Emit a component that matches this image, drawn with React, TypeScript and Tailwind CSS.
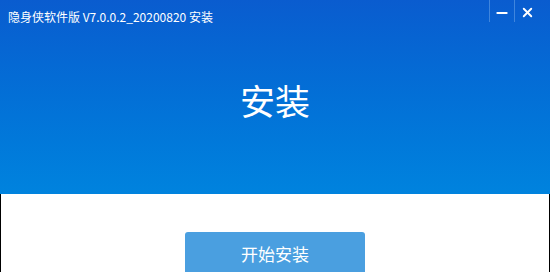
import { Minus, X } from "lucide-react";

const FONT = "'Microsoft YaHei', 'Noto Sans CJK SC', 'Noto Sans', sans-serif";

export default function App() {
  return (
    <div className="w-[550px] h-[272px] overflow-hidden flex flex-col bg-white" style={{ fontFamily: FONT }}>
      <div className="h-[194px] shrink-0 flex flex-col bg-gradient-to-b from-[#0a5ccf] to-[#0083de]">
        <div className="h-[34px] flex items-start justify-between">
          <div className="pl-[8px] pt-[8px] text-[12px] leading-[18px] text-white">
            隐身侠软件版 V7.0.0.2_20200820 安装
          </div>
          <div className="flex items-start pr-[11px]">
            <div className="w-px h-[22px] bg-[#3f85dd]" />
            <button className="w-[24px] h-[25px] flex items-center justify-center text-white">
              <Minus size={16} strokeWidth={3} />
            </button>
            <div className="w-px h-[22px] bg-[#3f85dd]" />
            <button className="w-[24px] h-[25px] flex items-center justify-center text-white">
              <X size={15} strokeWidth={3} />
            </button>
          </div>
        </div>
        <div className="flex-1 flex justify-center pt-[46px]">
          <span className="text-[35px] leading-[40px] text-white">安装</span>
        </div>
      </div>
      <div className="flex-1 flex justify-center pt-[38px] border-x border-black">
        <button className="w-[180px] h-[44px] shrink-0 rounded-[3px] bg-[#4a9fe0] text-white text-[17px] leading-[44px]">
          开始安装
        </button>
      </div>
    </div>
  );
}
